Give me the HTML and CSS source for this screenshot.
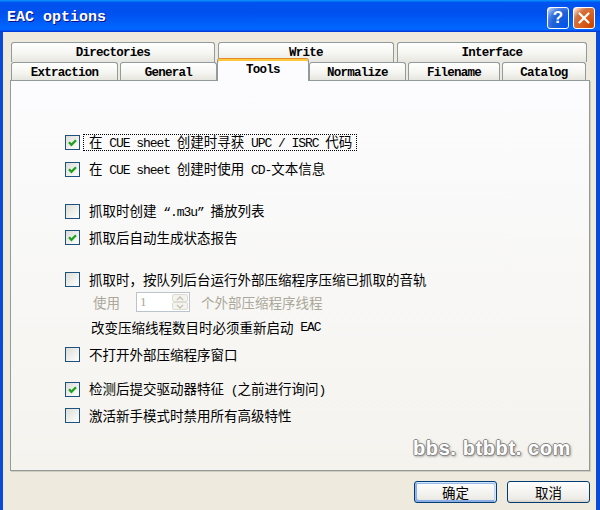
FILE: index.html
```html
<!DOCTYPE html>
<html lang="zh-CN">
<head>
    <meta charset="UTF-8">
    <title>EAC options</title>
    <link rel="stylesheet" href="styles.css">
</head>
<body>
    <div class="window">
        <div class="titlebar">
            <span class="title">EAC options</span>
            <div class="title-btns">
                <button class="tb-btn help">?</button>
                <button class="tb-btn close">
                    <svg width="20" height="20" viewBox="0 0 20 20"><path d="M5.5 5.5 L14.5 14.5 M14.5 5.5 L5.5 14.5" stroke="#fff" stroke-width="2.2" stroke-linecap="round"/></svg>
                </button>
            </div>
        </div>

        <div class="frame">
            <div class="tabs">
                <div class="tab-row back">
                    <div class="tab">Directories</div>
                    <div class="tab">Write</div>
                    <div class="tab">Interface</div>
                </div>
                <div class="tab-row front">
                    <div class="tab">Extraction</div>
                    <div class="tab">General</div>
                    <div class="tab active">Tools</div>
                    <div class="tab">Normalize</div>
                    <div class="tab">Filename</div>
                    <div class="tab">Catalog</div>
                </div>
            </div>

            <div class="panel">
                <div class="options">
                    <div class="opt">
                        <span class="box checked"><svg width="13" height="13" viewBox="0 0 13 13"><path d="M3 6.3 L5.4 8.8 L10 4.2" fill="none" stroke="#21a121" stroke-width="2.3"/></svg></span>
                        <span class="label focus">在<span class="en"> CUE sheet </span>创建时寻获<span class="en"> UPC / ISRC </span>代码</span>
                    </div>
                    <div class="opt gap-s">
                        <span class="box checked"><svg width="13" height="13" viewBox="0 0 13 13"><path d="M3 6.3 L5.4 8.8 L10 4.2" fill="none" stroke="#21a121" stroke-width="2.3"/></svg></span>
                        <span class="label">在<span class="en"> CUE sheet </span>创建时使用<span class="en"> CD-</span>文本信息</span>
                    </div>

                    <div class="opt gap-l">
                        <span class="box"></span>
                        <span class="label">抓取时创建<span class="en"> “.m3u” </span>播放列表</span>
                    </div>
                    <div class="opt gap-xs">
                        <span class="box checked"><svg width="13" height="13" viewBox="0 0 13 13"><path d="M3 6.3 L5.4 8.8 L10 4.2" fill="none" stroke="#21a121" stroke-width="2.3"/></svg></span>
                        <span class="label">抓取后自动生成状态报告</span>
                    </div>

                    <div class="opt gap-l">
                        <span class="box"></span>
                        <span class="label">抓取时，按队列后台运行外部压缩程序压缩已抓取的音轨</span>
                    </div>
                    <div class="spin-row">
                        <span class="muted">使用</span>
                        <div class="spin">
                            <span class="spin-val">1</span>
                            <div class="spin-arrows">
                                <span class="arrow"><svg width="8" height="5" viewBox="0 0 8 5"><path d="M1 4 L4 1 L7 4" fill="none" stroke="#c3c1b6" stroke-width="1.4"/></svg></span>
                                <span class="arrow"><svg width="8" height="5" viewBox="0 0 8 5"><path d="M1 1 L4 4 L7 1" fill="none" stroke="#c3c1b6" stroke-width="1.4"/></svg></span>
                            </div>
                        </div>
                        <span class="muted">个外部压缩程序线程</span>
                    </div>
                    <div class="note">改变压缩线程数目时必须重新启动<span class="en"> EAC</span></div>
                    <div class="opt gap-s">
                        <span class="box"></span>
                        <span class="label">不打开外部压缩程序窗口</span>
                    </div>

                    <div class="opt gap-m">
                        <span class="box checked"><svg width="13" height="13" viewBox="0 0 13 13"><path d="M3 6.3 L5.4 8.8 L10 4.2" fill="none" stroke="#21a121" stroke-width="2.3"/></svg></span>
                        <span class="label">检测后提交驱动器特征<span class="en"> (</span>之前进行询问<span class="en">)</span></span>
                    </div>
                    <div class="opt gap-xs">
                        <span class="box"></span>
                        <span class="label">激活新手模式时禁用所有高级特性</span>
                    </div>
                </div>

                <div class="watermark">bbs. btbbt. com</div>
            </div>

            <div class="actions">
                <button class="btn default">确定</button>
                <button class="btn">取消</button>
            </div>
        </div>
    </div>
</body>
</html>
```

FILE: styles.css
```css
* {
    box-sizing: border-box;
}
body {
    margin: 0;
    font-family: "Noto Sans CJK SC", sans-serif;
    font-size: 13.5px;
    color: #000;
    background-color: #eeeadd;
}
.window {
    width: 600px;
    height: 510px;
    display: flex;
    flex-direction: column;
    overflow: hidden;
}

/* title bar */
.titlebar {
    height: 32px;
    flex-shrink: 0;
    display: flex;
    align-items: center;
    justify-content: space-between;
    padding: 0 5px 0 7px;
    background: linear-gradient(180deg, #0997ff, #0053ee 8%, #0050ee 40%, #06f 88%, #06f 93%, #005bff 95%, #003dd7 96%, #003dd7);
}
.title {
    font-family: "Liberation Mono", monospace;
    font-weight: bold;
    font-size: 15px;
    color: #fff;
    text-shadow: 1px 1px #0f1089;
    margin-top: 2px;
}
.title-btns {
    display: flex;
    gap: 4px;
    margin-top: 4px;
}
.tb-btn {
    width: 22px;
    height: 22px;
    padding: 0;
    border: 1px solid #fff;
    border-radius: 3px;
    display: flex;
    align-items: center;
    justify-content: center;
    color: #fff;
    font-family: "Liberation Sans", sans-serif;
    font-weight: bold;
    font-size: 17px;
}
.tb-btn.help {
    background: radial-gradient(circle at 90% 90%, #0054e9 0, #2263d5 55%, #4479e4 70%, #a3bbec 90%, #fff 100%);
}
.tb-btn.close {
    background: radial-gradient(circle at 90% 90%, #cc4600 0, #dc6527 55%, #cd7546 70%, #ffccb2 90%, #fff 100%);
}

/* dialog body */
.frame {
    flex: 1;
    border-left: 3px solid #0a4adb;
    border-right: 4px solid #0a4adb;
    padding-top: 10px;
    display: flex;
    flex-direction: column;
}
.tabs {
    margin-left: 8px;
}
.tab-row {
    display: grid;
}
.tab-row.back {
    grid-template-columns: 204px 176px 190px;
    column-gap: 3px;
    height: 20px;
}
.tab-row.front {
    grid-template-columns: 107px 97px 88px 97px 92px 84px;
    column-gap: 2px;
    height: 18px;
}
.tab {
    border: 1px solid #919b9c;
    border-bottom: 0;
    border-radius: 3px 3px 0 0;
    background: linear-gradient(#fff, #f4f4f0 60%, #e6e5de);
    display: flex;
    align-items: center;
    justify-content: center;
    font-family: "Liberation Mono", monospace;
    font-weight: bold;
    font-size: 12.5px;
    letter-spacing: -0.75px;
}
.tab-row.front .tab {
    padding-top: 2px;
}
.tab-row.front .tab.active {
    margin: -4px -2px -1px;
    padding-top: 0;
    position: relative;
    z-index: 1;
    background: #fcfcfe;
    border-top-color: #e68b2c;
    box-shadow: inset 0 2px #ffc73c;
}

.panel {
    position: relative;
    height: 391px;
    margin: 0 6px 0 7px;
    border: 1px solid #919b9c;
    background: linear-gradient(#fcfcfe, #f4f3ee);
    box-shadow: 1px 1px 0 #d0cdbf;
    padding: 51px 0 0 54px;
}
.options {
    display: flex;
    flex-direction: column;
}
.opt {
    height: 20px;
    display: flex;
    align-items: center;
}
.gap-xs {
    margin-top: 6px;
}
.gap-s {
    margin-top: 7px;
}
.gap-m {
    margin-top: 15px;
}
.gap-l {
    margin-top: 22px;
}
.box {
    width: 15px;
    height: 15px;
    flex-shrink: 0;
    border: 1px solid #1c5180;
    background: linear-gradient(135deg, #dcdcd7, #fff);
    display: flex;
    align-items: center;
    justify-content: center;
    margin-right: 3px;
}
.label {
    line-height: 13px;
    padding: 0 4px 0 5px;
    border: 1px dotted transparent;
    white-space: nowrap;
}
.label.focus {
    border-color: #000;
}
.en {
    font-family: "Liberation Mono", monospace;
    font-size: 13px;
    letter-spacing: -1.05px;
    white-space: pre;
}

.spin-row {
    height: 22px;
    margin-top: 2px;
    margin-left: 28px;
    display: flex;
    align-items: center;
}
.muted {
    color: #aca899;
}
.spin {
    width: 54px;
    height: 20px;
    margin: 0 11px 0 16px;
    border: 1px solid #b9c4cc;
    background: #fff;
    display: flex;
    align-items: center;
    justify-content: space-between;
    padding: 1px 1px 1px 3px;
}
.spin-val {
    font-family: "Liberation Serif", serif;
    font-size: 13px;
    color: #aca899;
}
.spin-arrows {
    width: 16px;
    height: 16px;
    display: flex;
    flex-direction: column;
}
.arrow {
    flex: 1;
    display: flex;
    align-items: center;
    justify-content: center;
    border: 1px solid #dedcd2;
    border-radius: 2px;
    background: #f4f3ee;
}
.note {
    height: 20px;
    margin-top: 4px;
    margin-left: 26px;
    display: flex;
    align-items: center;
}

.watermark {
    position: absolute;
    left: 402px;
    top: 357px;
    font-family: "Liberation Sans", sans-serif;
    font-weight: bold;
    font-size: 20px;
    line-height: 1;
    color: #fff;
    letter-spacing: 0.6px;
    text-shadow: 1px 0 #8a8a8a, -1px 0 #8a8a8a, 0 1px #8a8a8a, 0 -1px #8a8a8a, 1px 1px 3px #555;
}

.actions {
    margin-top: 10px;
    padding-right: 6px;
    display: flex;
    justify-content: flex-end;
    gap: 10px;
}
.btn {
    width: 83px;
    height: 22px;
    padding: 0;
    border: 1px solid #003c74;
    border-radius: 3px;
    background: linear-gradient(180deg, #fff, #ecebe6 86%, #d6d0c5);
    font-family: "Noto Sans CJK SC", sans-serif;
    font-size: 13.5px;
    color: #000;
}
.btn.default {
    box-shadow: inset -1px 1px #cee7ff, inset 1px 2px #98b8ea, inset -2px 2px #bcd4f6, inset 1px -1px #89ade4, inset 2px -2px #89ade4;
}
```
